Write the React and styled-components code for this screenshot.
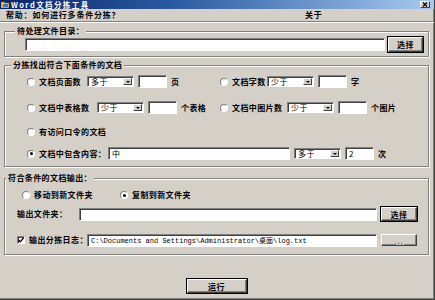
import React from 'react';
import styled, { createGlobalStyle } from 'styled-components';

const FONT = `"Noto Sans CJK SC", "Noto Sans", sans-serif`;

const Global = createGlobalStyle`
  html, body { margin: 0; padding: 0; background: #d4d0c8; }
  body { font-family: ${FONT}; }
`;

const Window = styled.div`
  width: 435px;
  height: 300px;
  box-sizing: border-box;
  background: #d4d0c8;
  border-right: 1px solid #404040;
  border-bottom: 1px solid #404040;
  box-shadow: inset -1px -1px 0 #808080;
  display: flex;
  flex-direction: column;
  font-family: ${FONT};
  font-size: 8px;
  font-weight: 700;
  letter-spacing: 0.4px;
  color: #000;
  overflow: hidden;
`;

const TitleBar = styled.div`
  height: 9px;
  flex: none;
  display: flex;
  align-items: center;
  background: linear-gradient(to right, #0a246a 0%, #2a5aa0 40%, #a6caf0 100%);
  padding-left: 1px;
`;

const TitleText = styled.span`
  color: #fff;
  font-size: 7.5px;
  line-height: 9px;
  letter-spacing: 1.4px;
  margin-left: 2px;
`;

const CloseBtn = styled.span`
  margin-left: auto;
  margin-right: 4px;
  width: 10px;
  height: 7px;
  box-sizing: border-box;
  background: #d4d0c8;
  border: 1px solid;
  border-color: #fff #404040 #404040 #fff;
  display: flex;
  align-items: center;
  justify-content: center;
`;

const MenuBar = styled.div`
  height: 12px;
  flex: none;
  display: grid;
  grid-template-columns: 299px auto;
  align-items: center;
  padding-left: 6px;
  line-height: 12px;
  letter-spacing: 0.8px;
`;

const Separator = styled.div`
  height: 0;
  flex: none;
  border-top: 1px solid #808080;
  border-bottom: 1px solid #fff;
`;

const Body = styled.div`
  flex: 1;
  display: flex;
  flex-direction: column;
  padding: 0 5px 0 4px;
`;

const Group = styled.fieldset`
  margin: ${(p) => p.$mt}px 0 0;
  padding: 0;
  min-inline-size: 0;
  border: 1px solid #808080;
  box-shadow: inset 1px 1px 0 #fff, 1px 1px 0 #fff;
`;

const Legend = styled.legend`
  margin-left: ${(p) => p.$indent}px;
  padding: 0 2px;
  height: 10px;
  line-height: 10px;
  background: #d4d0c8;
`;

const GroupBody = styled.div`
  padding: ${(p) => p.$pad};
  display: flex;
  flex-direction: column;
`;

const Row = styled.div`
  display: flex;
  align-items: center;
  gap: ${(p) => (p.$gap !== undefined ? p.$gap : 4)}px;
  height: ${(p) => p.$h || 13}px;
  margin-top: ${(p) => p.$mt || 0}px;
  margin-left: ${(p) => p.$ml || 0}px;
`;

const TwoCol = styled.div`
  display: grid;
  grid-template-columns: 193px auto;
  height: 13px;
  margin-top: ${(p) => p.$mt || 0}px;
`;

const Cell = styled.div`
  display: flex;
  align-items: center;
  gap: 4px;
`;

const Label = styled.span`
  width: ${(p) => (p.$w ? `${p.$w}px` : 'auto')};
  flex: none;
  white-space: nowrap;
  line-height: 12px;
`;

const RadioDot = styled.span`
  width: 8px;
  height: 8px;
  flex: none;
  box-sizing: border-box;
  border-radius: 50%;
  background: #fff;
  border: 1px solid;
  border-color: #808080 #fff #fff #808080;
  display: flex;
  align-items: center;
  justify-content: center;
  &::after {
    content: '';
    width: 3px;
    height: 3px;
    border-radius: 50%;
    background: ${(p) => (p.$on ? '#000' : 'transparent')};
  }
`;

const CheckBox = styled.span`
  width: 8px;
  height: 8px;
  flex: none;
  box-sizing: border-box;
  background: #fff;
  border: 1px solid;
  border-color: #808080 #fff #fff #808080;
  box-shadow: inset 1px 1px 0 #404040;
  display: flex;
  align-items: center;
  justify-content: center;
`;

const Field = styled.div`
  width: ${(p) => p.$w}px;
  height: ${(p) => p.$h || 13}px;
  flex: none;
  box-sizing: border-box;
  background: #fff;
  border: 1px solid;
  border-color: #808080 #fff #fff #808080;
  box-shadow: inset 1px 1px 0 #404040;
  padding-left: 3px;
  display: flex;
  align-items: center;
  font-weight: 400;
  font-size: ${(p) => (p.$mono ? 7 : 8)}px;
  letter-spacing: ${(p) => (p.$mono ? 0 : 0.4)}px;
  font-family: ${(p) => (p.$mono ? `"Liberation Mono", "Noto Sans CJK SC", monospace` : FONT)};
  white-space: nowrap;
  overflow: hidden;
`;

const Combo = styled.div`
  width: 47px;
  height: 11px;
  flex: none;
  box-sizing: border-box;
  background: #fff;
  border: 1px solid;
  border-color: #808080 #fff #fff #808080;
  box-shadow: inset 1px 1px 0 #404040;
  padding-left: 3px;
  display: flex;
  align-items: center;
  justify-content: space-between;
  font-weight: 400;
  line-height: 9px;
`;

const ComboArrow = styled.span`
  width: 9px;
  height: 7px;
  margin-right: 1px;
  box-sizing: border-box;
  background: #d4d0c8;
  border: 1px solid;
  border-color: #fff #404040 #404040 #fff;
  display: flex;
  align-items: center;
  justify-content: center;
  &::after {
    content: '';
    border-left: 2px solid transparent;
    border-right: 2px solid transparent;
    border-top: 2px solid #000;
  }
`;

const Button = styled.button`
  width: ${(p) => p.$w}px;
  height: ${(p) => p.$h}px;
  flex: none;
  margin: 0;
  padding: 0;
  box-sizing: border-box;
  background: #d4d0c8;
  border: 1px solid;
  border-color: #fff #404040 #404040 #fff;
  box-shadow: inset -1px -1px 0 #808080;
  outline: ${(p) => (p.$default ? '1px solid #000' : 'none')};
  font-family: ${FONT};
  font-size: 8px;
  font-weight: 700;
  letter-spacing: 0.4px;
  color: ${(p) => (p.$disabled ? '#808080' : '#000')};
  text-shadow: ${(p) => (p.$disabled ? '1px 1px 0 #fff' : 'none')};
  display: flex;
  align-items: center;
  justify-content: center;
`;

const Footer = styled.div`
  flex: 1;
  display: flex;
  justify-content: center;
  align-items: flex-start;
  padding-top: 24px;
`;

const AppIcon = () => (
  <svg width="8" height="7" viewBox="0 0 8 7">
    <path d="M0 1h3l1 1h4v5H0z" fill="#e8c84a" stroke="#8a6a10" strokeWidth="0.5" />
    <rect x="2" y="3" width="5" height="3" fill="#3a78d0" />
  </svg>
);

const Combobox = ({ value }) => (
  <Combo>
    <span>{value}</span>
    <ComboArrow />
  </Combo>
);

export default function App() {
  return (
    <>
      <Global />
      <Window>
        <TitleBar>
          <AppIcon />
          <TitleText>Word文档分拣工具</TitleText>
          <CloseBtn>
            <svg width="6" height="5" viewBox="0 0 6 5">
              <path d="M1 0.5L5 4.5M5 0.5L1 4.5" stroke="#000" strokeWidth="1.2" />
            </svg>
          </CloseBtn>
        </TitleBar>
        <MenuBar>
          <span>帮助：如何进行多条件分拣？</span>
          <span>关于</span>
        </MenuBar>
        <Separator />
        <Body>
          <Group $mt={3}>
            <Legend $indent={10}>待处理文件目录：</Legend>
            <GroupBody $pad="1px 0 4px 20px">
              <Row $h={15} $gap={3}>
                <Field $w={360} />
                <Button $w={35} $h={15} $default>选择</Button>
              </Row>
            </GroupBody>
          </Group>

          <Group $mt={3}>
            <Legend $indent={6}>分拣找出符合下面条件的文档</Legend>
            <GroupBody $pad="5px 0 6px 22px">
              <TwoCol>
                <Cell>
                  <RadioDot />
                  <Label $w={44}>文档页面数</Label>
                  <Combobox value="多于" />
                  <Field $w={29} />
                  <Label>页</Label>
                </Cell>
                <Cell>
                  <RadioDot />
                  <Label $w={31}>文档字数</Label>
                  <Combobox value="少于" />
                  <Field $w={29} />
                  <Label>字</Label>
                </Cell>
              </TwoCol>
              <TwoCol $mt={13}>
                <Cell>
                  <RadioDot />
                  <Label $w={54}>文档中表格数</Label>
                  <Combobox value="少于" />
                  <Field $w={29} />
                  <Label>个表格</Label>
                </Cell>
                <Cell>
                  <RadioDot />
                  <Label $w={51}>文档中图片数</Label>
                  <Combobox value="少于" />
                  <Field $w={29} />
                  <Label>个图片</Label>
                </Cell>
              </TwoCol>
              <Row $mt={11}>
                <RadioDot />
                <Label>有访问口令的文档</Label>
              </Row>
              <Row $mt={9}>
                <RadioDot $on />
                <Label $w={65}>文档中包含内容：</Label>
                <Field $w={182}>中</Field>
                <Combobox value="多于" />
                <Field $w={29}>2</Field>
                <Label>次</Label>
              </Row>
            </GroupBody>
          </Group>

          <Group $mt={6}>
            <Legend $indent={1}>符合条件的文档输出：</Legend>
            <GroupBody $pad="7px 0 7px 12px">
              <Row $h={10} $ml={5}>
                <RadioDot />
                <Label $w={82}>移动到新文件夹</Label>
                <RadioDot $on />
                <Label>复制到新文件夹</Label>
              </Row>
              <Row $h={14} $mt={7}>
                <Label $w={58}>输出文件夹：</Label>
                <Field $w={298} />
                <Button $w={36} $h={14} $default>选择</Button>
              </Row>
              <Row $h={14} $mt={12}>
                <CheckBox>
                  <svg width="6" height="6" viewBox="0 0 6 6">
                    <path d="M0.5 3L2.3 4.8L5.5 1" stroke="#000" strokeWidth="1.3" fill="none" />
                  </svg>
                </CheckBox>
                <Label $w={54}>输出分拣日志：</Label>
                <Field $w={290} $mono>C:\Documents and Settings\Administrator\桌面\log.txt</Field>
                <Button $w={36} $h={12} $disabled>...</Button>
              </Row>
            </GroupBody>
          </Group>

          <Footer>
            <Button $w={60} $h={14} $default>运行</Button>
          </Footer>
        </Body>
      </Window>
    </>
  );
}
